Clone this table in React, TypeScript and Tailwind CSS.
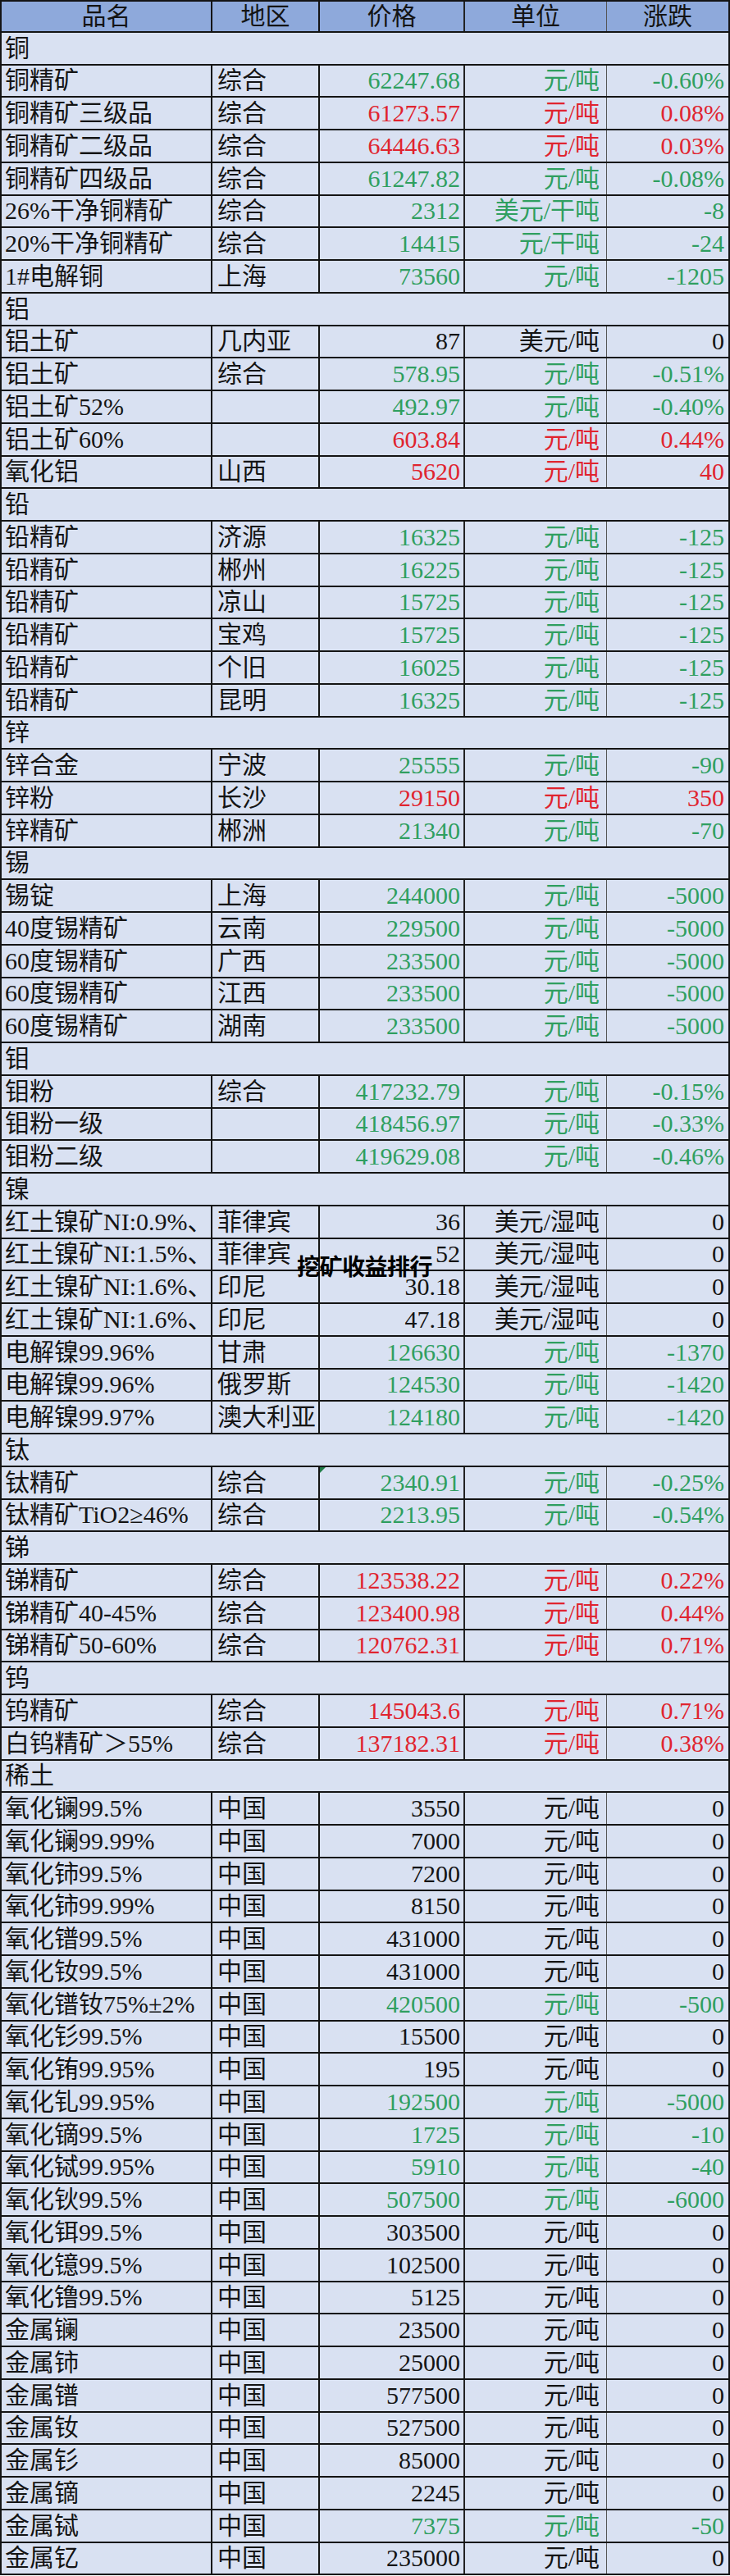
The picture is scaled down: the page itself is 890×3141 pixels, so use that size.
import React from "react";

type C = "g" | "r" | "k";
type Row =
  | { s: string }
  | { n: string; a: string; p: string; u: string; d: string; c: C; tri?: boolean };

const rows: Row[] = [
  { s: "铜" },
  { n: "铜精矿", a: "综合", p: "62247.68", u: "元/吨", d: "-0.60%", c: "g" },
  { n: "铜精矿三级品", a: "综合", p: "61273.57", u: "元/吨", d: "0.08%", c: "r" },
  { n: "铜精矿二级品", a: "综合", p: "64446.63", u: "元/吨", d: "0.03%", c: "r" },
  { n: "铜精矿四级品", a: "综合", p: "61247.82", u: "元/吨", d: "-0.08%", c: "g" },
  { n: "26%干净铜精矿", a: "综合", p: "2312", u: "美元/干吨", d: "-8", c: "g" },
  { n: "20%干净铜精矿", a: "综合", p: "14415", u: "元/干吨", d: "-24", c: "g" },
  { n: "1#电解铜", a: "上海", p: "73560", u: "元/吨", d: "-1205", c: "g" },
  { s: "铝" },
  { n: "铝土矿", a: "几内亚", p: "87", u: "美元/吨", d: "0", c: "k" },
  { n: "铝土矿", a: "综合", p: "578.95", u: "元/吨", d: "-0.51%", c: "g" },
  { n: "铝土矿52%", a: "", p: "492.97", u: "元/吨", d: "-0.40%", c: "g" },
  { n: "铝土矿60%", a: "", p: "603.84", u: "元/吨", d: "0.44%", c: "r" },
  { n: "氧化铝", a: "山西", p: "5620", u: "元/吨", d: "40", c: "r" },
  { s: "铅" },
  { n: "铅精矿", a: "济源", p: "16325", u: "元/吨", d: "-125", c: "g" },
  { n: "铅精矿", a: "郴州", p: "16225", u: "元/吨", d: "-125", c: "g" },
  { n: "铅精矿", a: "凉山", p: "15725", u: "元/吨", d: "-125", c: "g" },
  { n: "铅精矿", a: "宝鸡", p: "15725", u: "元/吨", d: "-125", c: "g" },
  { n: "铅精矿", a: "个旧", p: "16025", u: "元/吨", d: "-125", c: "g" },
  { n: "铅精矿", a: "昆明", p: "16325", u: "元/吨", d: "-125", c: "g" },
  { s: "锌" },
  { n: "锌合金", a: "宁波", p: "25555", u: "元/吨", d: "-90", c: "g" },
  { n: "锌粉", a: "长沙", p: "29150", u: "元/吨", d: "350", c: "r" },
  { n: "锌精矿", a: "郴洲", p: "21340", u: "元/吨", d: "-70", c: "g" },
  { s: "锡" },
  { n: "锡锭", a: "上海", p: "244000", u: "元/吨", d: "-5000", c: "g" },
  { n: "40度锡精矿", a: "云南", p: "229500", u: "元/吨", d: "-5000", c: "g" },
  { n: "60度锡精矿", a: "广西", p: "233500", u: "元/吨", d: "-5000", c: "g" },
  { n: "60度锡精矿", a: "江西", p: "233500", u: "元/吨", d: "-5000", c: "g" },
  { n: "60度锡精矿", a: "湖南", p: "233500", u: "元/吨", d: "-5000", c: "g" },
  { s: "钼" },
  { n: "钼粉", a: "综合", p: "417232.79", u: "元/吨", d: "-0.15%", c: "g" },
  { n: "钼粉一级", a: "", p: "418456.97", u: "元/吨", d: "-0.33%", c: "g" },
  { n: "钼粉二级", a: "", p: "419629.08", u: "元/吨", d: "-0.46%", c: "g" },
  { s: "镍" },
  { n: "红土镍矿NI:0.9%、", a: "菲律宾", p: "36", u: "美元/湿吨", d: "0", c: "k" },
  { n: "红土镍矿NI:1.5%、", a: "菲律宾", p: "52", u: "美元/湿吨", d: "0", c: "k" },
  { n: "红土镍矿NI:1.6%、", a: "印尼", p: "30.18", u: "美元/湿吨", d: "0", c: "k" },
  { n: "红土镍矿NI:1.6%、", a: "印尼", p: "47.18", u: "美元/湿吨", d: "0", c: "k" },
  { n: "电解镍99.96%", a: "甘肃", p: "126630", u: "元/吨", d: "-1370", c: "g" },
  { n: "电解镍99.96%", a: "俄罗斯", p: "124530", u: "元/吨", d: "-1420", c: "g" },
  { n: "电解镍99.97%", a: "澳大利亚", p: "124180", u: "元/吨", d: "-1420", c: "g" },
  { s: "钛" },
  { n: "钛精矿", a: "综合", p: "2340.91", u: "元/吨", d: "-0.25%", c: "g", tri: true },
  { n: "钛精矿TiO2≥46%", a: "综合", p: "2213.95", u: "元/吨", d: "-0.54%", c: "g" },
  { s: "锑" },
  { n: "锑精矿", a: "综合", p: "123538.22", u: "元/吨", d: "0.22%", c: "r" },
  { n: "锑精矿40-45%", a: "综合", p: "123400.98", u: "元/吨", d: "0.44%", c: "r" },
  { n: "锑精矿50-60%", a: "综合", p: "120762.31", u: "元/吨", d: "0.71%", c: "r" },
  { s: "钨" },
  { n: "钨精矿", a: "综合", p: "145043.6", u: "元/吨", d: "0.71%", c: "r" },
  { n: "白钨精矿＞55%", a: "综合", p: "137182.31", u: "元/吨", d: "0.38%", c: "r" },
  { s: "稀土" },
  { n: "氧化镧99.5%", a: "中国", p: "3550", u: "元/吨", d: "0", c: "k" },
  { n: "氧化镧99.99%", a: "中国", p: "7000", u: "元/吨", d: "0", c: "k" },
  { n: "氧化铈99.5%", a: "中国", p: "7200", u: "元/吨", d: "0", c: "k" },
  { n: "氧化铈99.99%", a: "中国", p: "8150", u: "元/吨", d: "0", c: "k" },
  { n: "氧化镨99.5%", a: "中国", p: "431000", u: "元/吨", d: "0", c: "k" },
  { n: "氧化钕99.5%", a: "中国", p: "431000", u: "元/吨", d: "0", c: "k" },
  { n: "氧化镨钕75%±2%", a: "中国", p: "420500", u: "元/吨", d: "-500", c: "g" },
  { n: "氧化钐99.5%", a: "中国", p: "15500", u: "元/吨", d: "0", c: "k" },
  { n: "氧化铕99.95%", a: "中国", p: "195", u: "元/吨", d: "0", c: "k" },
  { n: "氧化钆99.95%", a: "中国", p: "192500", u: "元/吨", d: "-5000", c: "g" },
  { n: "氧化镝99.5%", a: "中国", p: "1725", u: "元/吨", d: "-10", c: "g" },
  { n: "氧化铽99.95%", a: "中国", p: "5910", u: "元/吨", d: "-40", c: "g" },
  { n: "氧化钬99.5%", a: "中国", p: "507500", u: "元/吨", d: "-6000", c: "g" },
  { n: "氧化铒99.5%", a: "中国", p: "303500", u: "元/吨", d: "0", c: "k" },
  { n: "氧化镱99.5%", a: "中国", p: "102500", u: "元/吨", d: "0", c: "k" },
  { n: "氧化镥99.5%", a: "中国", p: "5125", u: "元/吨", d: "0", c: "k" },
  { n: "金属镧", a: "中国", p: "23500", u: "元/吨", d: "0", c: "k" },
  { n: "金属铈", a: "中国", p: "25000", u: "元/吨", d: "0", c: "k" },
  { n: "金属镨", a: "中国", p: "577500", u: "元/吨", d: "0", c: "k" },
  { n: "金属钕", a: "中国", p: "527500", u: "元/吨", d: "0", c: "k" },
  { n: "金属钐", a: "中国", p: "85000", u: "元/吨", d: "0", c: "k" },
  { n: "金属镝", a: "中国", p: "2245", u: "元/吨", d: "0", c: "k" },
  { n: "金属铽", a: "中国", p: "7375", u: "元/吨", d: "-50", c: "g" },
  { n: "金属钇", a: "中国", p: "235000", u: "元/吨", d: "0", c: "k" },
];

const colorCls: Record<C, string> = {
  g: "text-[#2f9f60]",
  r: "text-[#e0242f]",
  k: "text-[#141414]",
};

const rowCls =
  "grid grid-cols-[257px_131px_177px_173px_148px] h-[39.76px] border-b-2 border-[#141414] bg-[#d9e1f2]";

export default function App() {
  return (
    <div
      className="relative w-[890px] border-x-2 border-[#141414] text-[30px] leading-none text-[#141414]"
      style={{ fontFamily: '"Liberation Serif", "Noto Sans CJK SC", serif' }}
    >
      <div className="grid grid-cols-[257px_131px_177px_173px_148px] h-[39.76px] border-y-2 border-[#141414] bg-[#8ea9db]">
        <div className="flex items-center justify-center border-r-2 border-[#141414]">品名</div>
        <div className="flex items-center justify-center border-r-2 border-[#141414]">地区</div>
        <div className="flex items-center justify-center border-r-2 border-[#222]">价格</div>
        <div className="flex items-center justify-center border-r border-[#555]">单位</div>
        <div className="flex items-center justify-center">涨跌</div>
      </div>
      {rows.map((r, i) =>
        "s" in r ? (
          <div
            key={i}
            className="flex h-[39.76px] items-center border-b-2 border-[#141414] bg-[#d9e1f2] pl-[4px]"
          >
            {r.s}
          </div>
        ) : (
          <div key={i} className={rowCls}>
            <div className="flex items-center whitespace-nowrap border-r-2 border-[#141414] pl-[4px] overflow-hidden">
              {r.n}
            </div>
            <div className="flex items-center whitespace-nowrap border-r-2 border-[#141414] pl-[6px] overflow-hidden">
              {r.a}
            </div>
            <div
              className={`relative flex items-center justify-end border-r-2 border-[#222] pr-[4px] ${colorCls[r.c]}`}
            >
              {r.tri ? (
                <span className="absolute left-0 top-0 h-0 w-0 border-r-[7px] border-t-[7px] border-r-transparent border-t-[#1f7a45]" />
              ) : null}
              {r.p}
            </div>
            <div
              className={`flex items-center justify-end whitespace-nowrap border-r border-[#555] pr-[8px] ${colorCls[r.c]}`}
            >
              {r.u}
            </div>
            <div className={`flex items-center justify-end pr-[5px] ${colorCls[r.c]}`}>{r.d}</div>
          </div>
        )
      )}
      <div
        className="pointer-events-none absolute left-[360px] top-[1529px] text-[28px] font-bold leading-none tracking-[-0.5px] text-black"
        style={{ fontFamily: '"Noto Sans CJK SC", sans-serif' }}
      >
        挖矿收益排行
      </div>
    </div>
  );
}
